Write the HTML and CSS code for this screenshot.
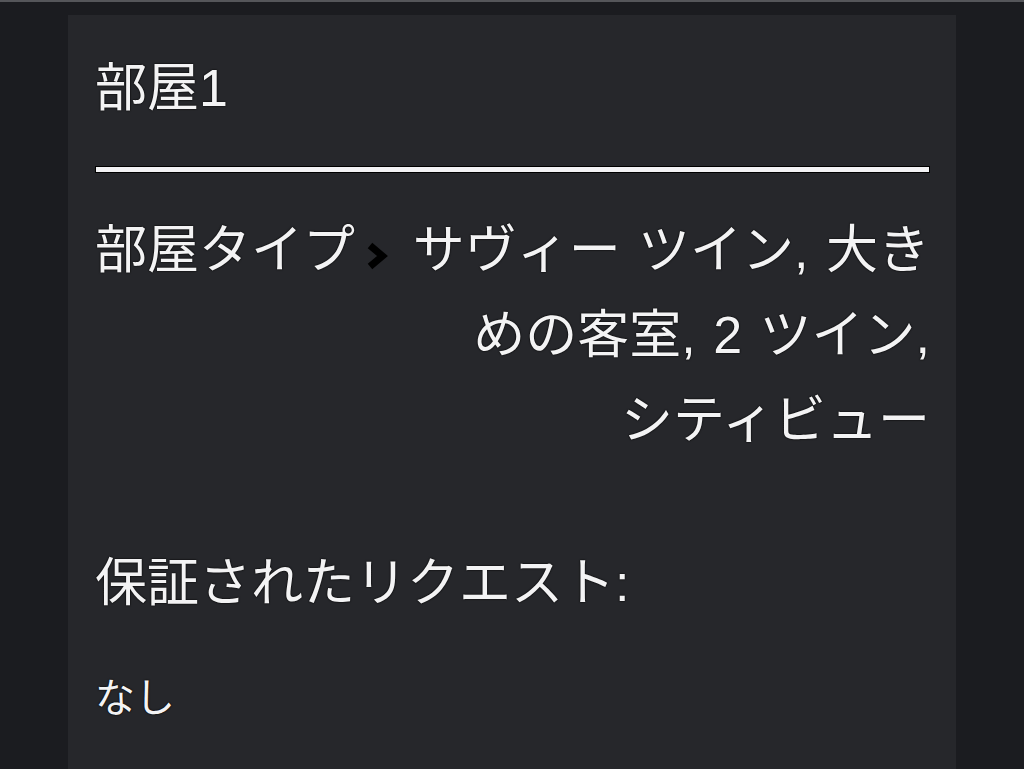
FILE: index.html
```html
<!DOCTYPE html>
<html lang="ja">
<head>
<meta charset="utf-8">
<title>部屋1</title>
<link rel="stylesheet" href="styles.css">
</head>
<body>
<div class="page">
  <section class="card">
    <h1 class="room-title">部屋1</h1>
    <hr class="divider">
    <div class="room-type">
      <span class="label">部屋タイプ</span>
      <svg class="chevron" width="22" height="28" viewBox="0 0 22 28" aria-hidden="true">
        <polyline points="4,3.5 16.5,14 4,24.5" fill="none" stroke="#000" stroke-width="7" stroke-linejoin="miter" stroke-linecap="butt"/>
      </svg>
      <span class="value">サヴィー ツイン, 大きめの客室, 2 ツイン, <span class="nowrap">シティビュー</span></span>
    </div>
    <h2 class="req-title">保証されたリクエスト:</h2>
    <p class="req-value">なし</p>
  </section>
</div>
</body>
</html>
```

FILE: styles.css
```css
html, body {
  margin: 0;
  padding: 0;
}
body {
  background: #1b1c20;
  border-top: 2px solid #55565a;
  font-family: "Liberation Sans", "Noto Sans CJK JP", sans-serif;
  color: #f3f3f4;
}
.page {
  padding: 13px 0 0 68px;
}
.card {
  box-sizing: border-box;
  width: 888px;
  height: 754px;
  background: #26272b;
  padding: 42px 26px 0 27px;
  text-shadow: 0 0 2px #000, 0 0 1px #000;
  overflow: hidden;
}
.room-title {
  margin: 0;
  font-size: 52px;
  font-weight: 400;
  line-height: 62px;
}
.divider {
  margin: 47px 0 0 0;
  border: 1px solid #000;
  background: #f2f2f4;
  box-sizing: border-box;
  height: 7px;
}
.room-type {
  display: flex;
  align-items: flex-start;
  margin-top: 35px;
  font-size: 52px;
  line-height: 85px;
}
.label {
  flex: none;
}
.chevron {
  flex: none;
  margin: 34px 16px 0 11px;
}
.value {
  flex: 1;
  text-align: right;
  word-spacing: 3px;
}
.nowrap {
  white-space: nowrap;
}
.req-title {
  margin: 89px 0 0 0;
  font-size: 52px;
  font-weight: 400;
  line-height: 62px;
}
.req-value {
  margin: 60px 0 0 0;
  font-size: 40px;
  line-height: 48px;
}
```
